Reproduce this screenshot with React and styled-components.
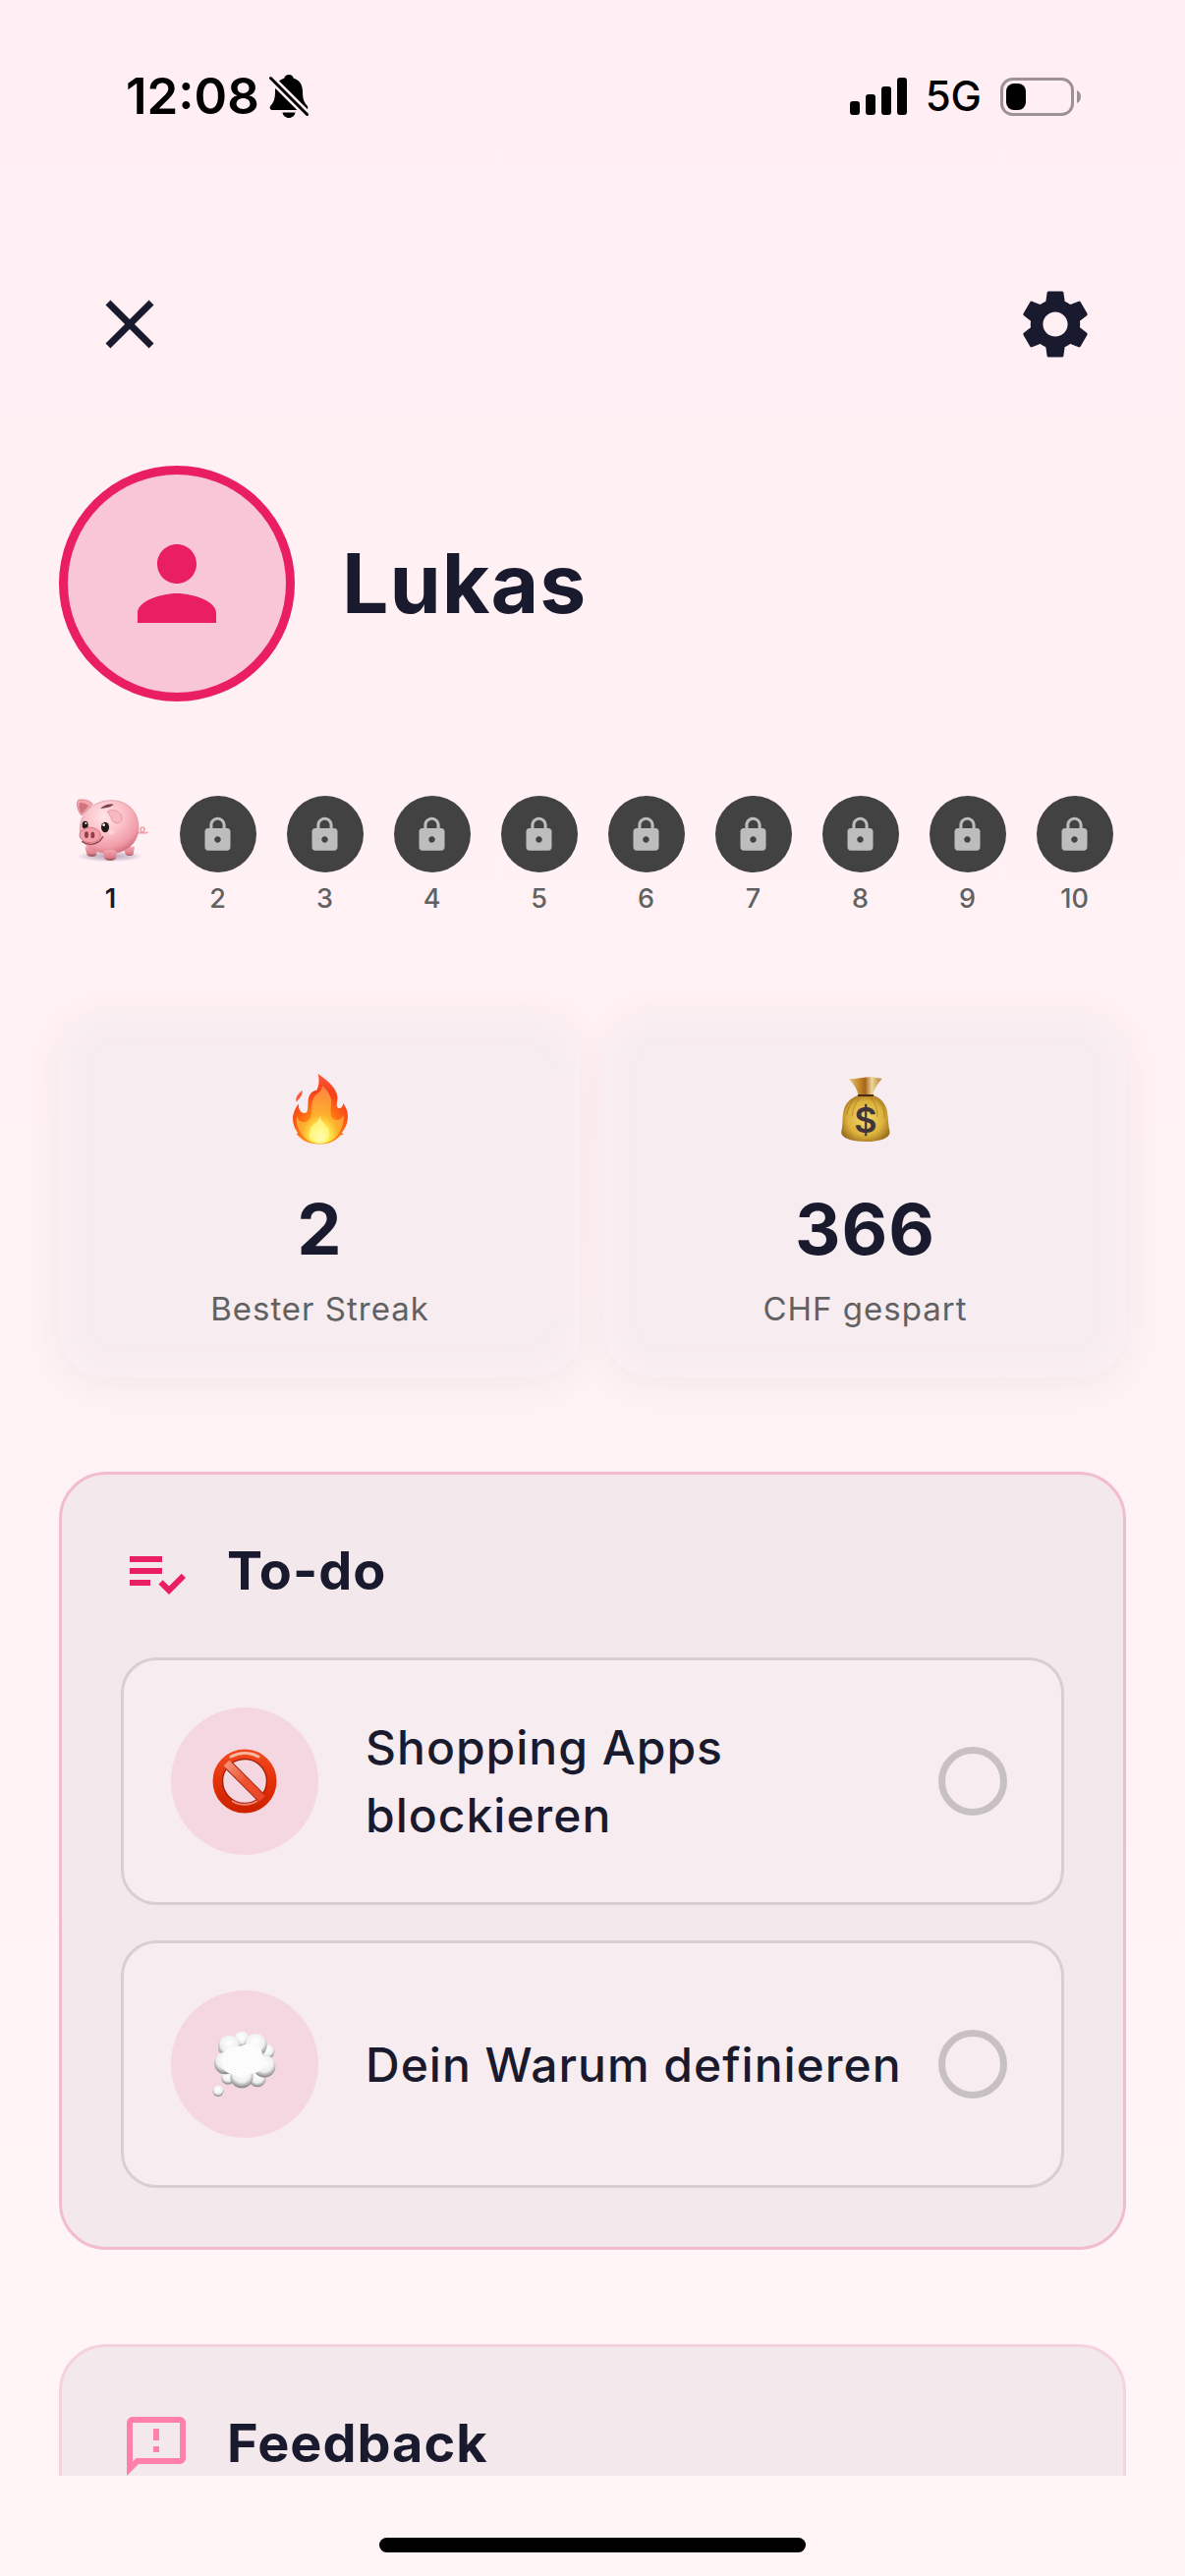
import React, { useState } from "react";
import styled, { createGlobalStyle } from "styled-components";
import {
  MdClose,
  MdLock,
  MdOutlineFeedback,
  MdPerson,
  MdPlaylistAddCheck,
  MdSettings,
} from "react-icons/md";

const GlobalStyle = createGlobalStyle`
  * {
    box-sizing: border-box;
  }
  body {
    margin: 0;
    color: #1a1a2e;
    font-family: Inter, "Liberation Sans", sans-serif;
  }
  h1, h2, p, ol, ul {
    margin: 0;
    padding: 0;
    list-style: none;
  }
`;

const Screen = styled.div`
  height: 100vh;
  display: flex;
  flex-direction: column;
  background: linear-gradient(#ffeff4, #fff2f4 55%, #fff5f7);
`;

const StatusBar = styled.div`
  display: flex;
  align-items: center;
  justify-content: space-between;
  height: 196px;
  padding: 0 105px 0 128px;
  color: #000;
`;

const StatusGroup = styled.div`
  display: flex;
  align-items: center;
  gap: ${(props) => props.$gap}px;
`;

const Clock = styled.span`
  font-size: 51px;
  line-height: 60px;
  font-weight: 600;
`;

const Network = styled.span`
  font-size: 42px;
  line-height: 60px;
  font-weight: 500;
`;

const Content = styled.main`
  flex: 1;
  min-height: 0;
  overflow: hidden;
  display: flex;
  flex-direction: column;
  gap: 96px;
  padding: 62px 60px 0;
  & > * {
    flex-shrink: 0;
  }
`;

const Top = styled.header`
  display: flex;
  flex-direction: column;
  gap: 72px;
`;

const Toolbar = styled.div`
  display: flex;
  justify-content: space-between;
`;

const IconButton = styled.button`
  display: flex;
  align-items: center;
  justify-content: center;
  width: 144px;
  height: 144px;
  padding: 0;
  border: 0;
  background: none;
  color: #1a1a2e;
  font-size: 84px;
  cursor: pointer;
`;

const Profile = styled.div`
  display: flex;
  align-items: center;
  gap: 48px;
`;

const Avatar = styled.div`
  display: flex;
  align-items: center;
  justify-content: center;
  width: 240px;
  height: 240px;
  border: 9px solid #e91e63;
  border-radius: 50%;
  background: #f9c6d8;
  color: #e91e63;
  font-size: 120px;
`;

const Name = styled.h1`
  font-size: 84px;
  line-height: 100px;
  font-weight: 700;
  letter-spacing: 1px;
`;

const Levels = styled.ol`
  display: flex;
  && {
    margin: 0 -2px;
  }
`;

const Level = styled.li`
  flex: 1;
  display: flex;
  flex-direction: column;
  align-items: center;
  gap: 8px;
  font-size: 27px;
  line-height: 38px;
  font-weight: ${(props) => (props.$active ? 600 : 500)};
  color: ${(props) => (props.$active ? "#1a1a2e" : "#616161")};
`;

const LevelBadge = styled.span`
  display: flex;
  align-items: center;
  justify-content: center;
  width: 78px;
  height: 78px;
  border-radius: 50%;
  background: #424242;
  color: #bdbdbd;
  font-size: 39px;
`;

const Stats = styled.section`
  display: grid;
  grid-template-columns: 1fr 1fr;
  gap: 24px;
`;

const StatCard = styled.div`
  display: flex;
  flex-direction: column;
  align-items: center;
  padding: 48px;
  border-radius: 48px;
  background: #f7ecef;
  box-shadow: 0 6px 36px rgba(60, 50, 60, 0.06),
    inset 0 0 36px rgba(255, 244, 247, 0.8);
`;

const StatIcon = styled.div`
  display: flex;
  align-items: center;
  height: 102px;
`;

const StatValue = styled.p`
  margin-top: 24px;
  font-size: 72px;
  line-height: 94px;
  font-weight: 700;
  letter-spacing: 1px;
`;

const StatLabel = styled.p`
  margin-top: 12px;
  font-size: 33px;
  line-height: 44px;
  letter-spacing: 1px;
  color: #616161;
`;

const Card = styled.section`
  padding: 60px;
  border: 3px solid ${(props) => props.$border};
  border-radius: 48px;
  background: #f3e8eb;
`;

const CardHeader = styled.div`
  display: flex;
  align-items: center;
  gap: 36px;
  min-height: 81px;
  color: ${(props) => props.$color};
  & svg {
    font-size: 72px;
  }
`;

const CardTitle = styled.h2`
  font-size: 54px;
  line-height: 60px;
  font-weight: 700;
  letter-spacing: 1px;
  color: #1a1a2e;
  && {
    padding-bottom: 6px;
  }
`;

const TodoList = styled.ul`
  display: flex;
  flex-direction: column;
  gap: 36px;
  && {
    margin-top: 45px;
  }
`;

const TodoItem = styled.label`
  display: flex;
  align-items: center;
  padding: 48px;
  border: 3px solid #d9ced1;
  border-radius: 36px;
  background: #f7ecef;
  cursor: pointer;
`;

const TodoIcon = styled.span`
  flex: none;
  display: flex;
  align-items: center;
  justify-content: center;
  width: 150px;
  height: 150px;
  border-radius: 50%;
  background: #f4d7e0;
`;

const TodoText = styled.span`
  flex: 1;
  margin: 0 24px 0 48px;
  font-size: 48px;
  line-height: 69px;
  font-weight: 500;
  letter-spacing: 1px;
`;

const Check = styled.input`
  flex: none;
  appearance: none;
  width: 70px;
  height: 70px;
  margin: 7px;
  border: 7px solid #c8c1c3;
  border-radius: 50%;
  cursor: pointer;
  &:checked {
    border-color: #e91e63;
    background: #e91e63;
  }
`;

const HomeArea = styled.footer`
  flex: none;
  display: flex;
  justify-content: center;
  height: 102px;
  padding-top: 63px;
`;

const HomeIndicator = styled.div`
  width: 36%;
  height: 15px;
  border-radius: 8px;
  background: #000;
`;

const BellOff = () => (
  <svg width="40" height="44" viewBox="0 0 40 44" aria-hidden="true">
    <path
      d="M20 0c2.500 0 4.300 1.500 4.600 3.500C31 5.500 34 10.500 34 17c0 8 1.500 11 4.500 14.500 1.500 2 1 4.500-2 4.500H3.500c-3 0-3.500-2.500-2-4.500C4.500 28 6 25 6 17 6 10.500 9 5.500 15.400 3.500 15.700 1.500 17.500 0 20 0zM13.500 38.500h13c-.5 3.200-3.200 5.500-6.500 5.500s-6-2.300-6.500-5.500z"
      fill="#000"
    />
    <path d="M1 3l38 38" stroke="#ffeff4" strokeWidth="8" />
    <path d="M1.500 3.500l37 37" stroke="#000" strokeWidth="3" strokeLinecap="round" />
  </svg>
);

const Signal = () => (
  <svg width="58" height="38" viewBox="0 0 58 38" aria-hidden="true">
    <rect x="0" y="24" width="10" height="14" rx="3" />
    <rect x="16" y="17" width="10" height="21" rx="3" />
    <rect x="32" y="9" width="10" height="29" rx="3" />
    <rect x="48" y="0" width="10" height="38" rx="3" />
  </svg>
);

const Battery = () => (
  <svg width="83" height="39" viewBox="0 0 83 39" aria-hidden="true">
    <rect x="1.500" y="1.500" width="72" height="36" rx="11" fill="none" stroke="#9c9194" strokeWidth="3" />
    <path d="M78 13c2.500 1 4 3.500 4 6.500s-1.500 5.500-4 6.500z" fill="#9c9194" />
    <rect x="6" y="6" width="20" height="27" rx="8" />
  </svg>
);

const Pig = () => (
  <svg width="78" height="78" viewBox="45 60 234 234" aria-hidden="true">
    <defs>
      <radialGradient id="pigBody" cx="0.42" cy="0.3" r="0.75">
        <stop offset="0" stopColor="#ffe6e8" />
        <stop offset="0.45" stopColor="#fbc0c8" />
        <stop offset="0.8" stopColor="#f09aa6" />
        <stop offset="1" stopColor="#c86675" />
      </radialGradient>
      <linearGradient id="pigLeg" x1="0" y1="0" x2="0" y2="1">
        <stop offset="0" stopColor="#f5a9b2" />
        <stop offset="0.7" stopColor="#dd7f8a" />
        <stop offset="1" stopColor="#8d4650" />
      </linearGradient>
      <radialGradient id="pigShade">
        <stop offset="0" stopColor="#8f7a98" stopOpacity="0.7" />
        <stop offset="0.7" stopColor="#b5a3be" stopOpacity="0.4" />
        <stop offset="1" stopColor="#cdbcd4" stopOpacity="0" />
      </radialGradient>
    </defs>
    <ellipse cx="158" cy="245" rx="104" ry="17" fill="url(#pigShade)" />
    <path d="M244 172c9 4 20 0 20-9s-12-8-12 0 10 14 21 9" fill="none" stroke="#eea0a8" strokeWidth="5" strokeLinecap="round" />
    <path d="M82 215h38l-2 26c-6 6-22 6-29 0zM200 215h34l-4 24c-5 5-18 5-24 0z" fill="url(#pigLeg)" />
    <path d="M62 73c14-4 36 1 44 12l-34 35C61 110 54 84 62 73z" fill="#f4a5ae" stroke="#c9707b" strokeWidth="2" />
    <path d="M66 81c9-1 22 4 28 10l-22 24c-8-9-10-24-6-34z" fill="#cf7681" />
    <path d="M163 74c50 0 83 35 83 82 0 44-33 80-86 80-55 0-93-27-93-75 0-50 44-87 96-87z" fill="url(#pigBody)" stroke="#dc8d98" strokeWidth="2" />
    <path d="M138 230c6-8 36-8 42 0l-3 22c-8 8-27 8-35 0z" fill="url(#pigLeg)" />
    <path d="M130 98c10-10 24-15 40-12-8 9-23 10-40 13z" fill="#74404a" />
    <path d="M152 108c12-8 30-4 39 8 8 12 4 26-8 27-14 1-19-8-21-17-3-9-10-10-10-18z" fill="#f8b8bf" stroke="#d9848f" strokeWidth="2" />
    <ellipse cx="163" cy="172" rx="9" ry="6" fill="#ffd9da" opacity="0.8" />
    <ellipse cx="83" cy="149" rx="9" ry="12" fill="#211819" />
    <ellipse cx="144" cy="156" rx="12" ry="16" fill="#211819" />
    <circle cx="85" cy="144" r="3" fill="#fff" />
    <circle cx="140" cy="149" r="4" fill="#fff" />
    <path d="M74 200c20 14 50 10 63-15" fill="none" stroke="#8f434e" strokeWidth="4" strokeLinecap="round" />
    <ellipse cx="98" cy="180" rx="32" ry="23" fill="#f4a0a9" stroke="#d57681" strokeWidth="3" />
    <ellipse cx="87" cy="179" rx="6" ry="10" fill="#8f3f4a" />
    <ellipse cx="106" cy="180" rx="6" ry="10" fill="#8f3f4a" />
  </svg>
);

const Fire = () => (
  <svg width="56" height="72" viewBox="0 0 56 72" aria-hidden="true">
    <defs>
      <radialGradient id="fireOuter" cx="0.5" cy="0.85" r="0.85">
        <stop offset="0" stopColor="#ffb300" />
        <stop offset="0.4" stopColor="#ff7b12" />
        <stop offset="0.7" stopColor="#f8401b" />
        <stop offset="1" stopColor="#f95a3c" />
      </radialGradient>
      <radialGradient id="fireInner" cx="0.5" cy="0.88" r="0.85">
        <stop offset="0" stopColor="#fffde0" />
        <stop offset="0.2" stopColor="#fff04d" />
        <stop offset="0.45" stopColor="#fdb02e" />
        <stop offset="1" stopColor="#ff8440" />
      </radialGradient>
    </defs>
    <path d="M9.600 16.700C10 22 7 25 3.400 28.500 2.500 23 6 20 9.600 16.700z" fill="#fb5b42" />
    <path d="M25.600 0C36 7 45 15 45.500 24c0 4-2 9 .5 10.700 3 1.300 5-1.200 5.300-4.700C55 35 56.500 40 55.800 46c-.5 6-3 10-6 14l2 1.500-3.500 1.200C43 69 36 71.500 27.500 71.500S11 69 7 64.500L3.500 61l1.800-.5C2 56 0 51 0 45.500 0 40 3 34.500 5.700 30.500c0 5 2 9.500 6 9.500 6 0 2-11 5.300-18 2-4 5-5 7.500-5.500C27 11 27 5 25.600 0z" fill="url(#fireOuter)" />
    <path d="M30 12c8 7 10 14 9 20-1 7-1 14 5 15 4 0 6-2 8-5 0 7-2 13-5 18-4 7-11 11-19.500 11S12 67 8 60c-3-5-5-10-4-17 2 5 5 7 9 6 10-3 3-16 9-26 3-4 8-5 8-11z" fill="url(#fireInner)" />
    <path d="M28 42c0 7 5 9 8 14 3 8-1 14-9 14s-13-6-9-14c2-5 9-7 10-14z" fill="#fffb9a" opacity="0.7" />
  </svg>
);

const MoneyBag = () => (
  <svg width="50" height="66" viewBox="0 0 50 66" aria-hidden="true">
    <defs>
      <radialGradient id="bagBody" cx="0.5" cy="0.5" r="0.62">
        <stop offset="0" stopColor="#f3da6a" />
        <stop offset="0.6" stopColor="#dcb23c" />
        <stop offset="1" stopColor="#8d5d17" />
      </radialGradient>
      <linearGradient id="bagNeck">
        <stop offset="0" stopColor="#e6c98c" />
        <stop offset="0.3" stopColor="#c78d2e" />
        <stop offset="0.5" stopColor="#a8651c" />
        <stop offset="0.7" stopColor="#edd79c" />
        <stop offset="1" stopColor="#b67c2c" />
      </linearGradient>
    </defs>
    <path d="M7.500 2c5 1 9-1 14-1 6-1 12-1 20 1-4 5-8 10-9 16H17.500C16 12 12 6 7.500 2z" fill="url(#bagNeck)" />
    <path d="M17 19h16c8 3 13 9 14 17 1 7 1 13 2.500 20 .5 6-9 10-24.500 10S-.5 62 .2 56C2 49 1 43 2.500 35 4 27 9 22 17 19z" fill="url(#bagBody)" />
    <path d="M19 21c-4 5-7 11-8 19M30 21c4 5 7 11 7 20M14 22c-5 5-7 10-8 17M40 25c3 5 4 10 4 17" fill="none" stroke="#a9791f" strokeWidth="1" opacity="0.7" />
    <path d="M17 18h16v2H17z" fill="#4b2a16" />
    <text x="25" y="57" textAnchor="middle" fontSize="36" fontWeight="600" fill="#41343a">
      $
    </text>
  </svg>
);

const Prohibited = () => (
  <svg width="66" height="66" viewBox="0 0 66 66" aria-hidden="true">
    <defs>
      <linearGradient id="ring" x1="0" y1="0" x2="0" y2="1">
        <stop offset="0" stopColor="#f0481e" />
        <stop offset="0.5" stopColor="#e4310a" />
        <stop offset="1" stopColor="#cf2300" />
      </linearGradient>
      <linearGradient id="bar" x1="0" y1="0" x2="1" y2="1">
        <stop offset="0" stopColor="#f4937c" />
        <stop offset="0.5" stopColor="#ee5230" />
        <stop offset="1" stopColor="#e8472a" />
      </linearGradient>
    </defs>
    <path d="M14 14l37 37" stroke="#a51a00" strokeWidth="10" />
    <circle cx="33" cy="33" r="27.500" fill="none" stroke="url(#ring)" strokeWidth="10" />
    <circle cx="33" cy="33" r="22.500" fill="none" stroke="#a82008" strokeWidth="1.500" />
    <path d="M14.500 14.500l36.500 36.500" stroke="url(#bar)" strokeWidth="8" />
    <path d="M19 8a29 29 0 0 1 28 0" fill="none" stroke="#fbd3c4" strokeWidth="3" strokeLinecap="round" opacity="0.8" />
    <path d="M20 53a24 24 0 0 0 26 0" fill="none" stroke="#f2a08d" strokeWidth="2" opacity="0.8" />
  </svg>
);

const Thought = () => (
  <svg width="66" height="68" viewBox="50 1040 198 204" aria-hidden="true">
    <defs>
      <radialGradient id="puff" cx="0.5" cy="0.35" r="0.65">
        <stop offset="0" stopColor="#fff" />
        <stop offset="0.6" stopColor="#f0f0f0" />
        <stop offset="1" stopColor="#7c7c7e" />
      </radialGradient>
    </defs>
    <g fill="url(#puff)">
      <circle cx="98" cy="1184" r="20" />
      <circle cx="218" cy="1104" r="22" />
      <circle cx="140" cy="1066" r="24" />
      <circle cx="188" cy="1186" r="26" />
      <circle cx="102" cy="1089" r="34" />
      <circle cx="182" cy="1084" r="35" />
      <circle cx="90" cy="1139" r="34" />
      <circle cx="209" cy="1149" r="34" />
      <circle cx="140" cy="1180" r="35" />
      <circle cx="68" cy="1224" r="17" />
    </g>
    <path d="M88 1104c18-20 38-12 52-18s38-10 54 4c12 20 18 42 8 66-12 14-28 12-40 18s-30 8-46 0c-22-4-34-14-36-34 0-18 0-26 8-36z" fill="#fcfcfc" />
  </svg>
);

const stats = [
  { icon: <Fire />, value: 2, label: "Bester Streak" },
  { icon: <MoneyBag />, value: 366, label: "CHF gespart" },
];

const todos = [
  { icon: <Prohibited />, text: "Shopping Apps blockieren" },
  { icon: <Thought />, text: "Dein Warum definieren" },
];

const Todo = ({ icon, text }) => {
  const [done, setDone] = useState(false);

  return (
    <li>
      <TodoItem>
        <TodoIcon>{icon}</TodoIcon>
        <TodoText>{text}</TodoText>
        <Check
          type="checkbox"
          checked={done}
          onChange={(e) => setDone(e.target.checked)}
        />
      </TodoItem>
    </li>
  );
};

const App = () => {
  return (
    <>
      <GlobalStyle />
      <Screen>
        <StatusBar>
          <StatusGroup $gap={10}>
            <Clock>12:08</Clock>
            <BellOff />
          </StatusGroup>
          <StatusGroup $gap={19}>
            <Signal />
            <Network>5G</Network>
            <Battery />
          </StatusGroup>
        </StatusBar>
        <Content>
          <Top>
            <Toolbar>
              <IconButton type="button" aria-label="Schliessen">
                <MdClose />
              </IconButton>
              <IconButton type="button" aria-label="Einstellungen">
                <MdSettings />
              </IconButton>
            </Toolbar>
            <Profile>
              <Avatar>
                <MdPerson />
              </Avatar>
              <Name>Lukas</Name>
            </Profile>
          </Top>
          <Levels>
            {Array.from({ length: 10 }, (_, idx) => (
              <Level key={idx} $active={idx === 0}>
                {idx === 0 ? (
                  <Pig />
                ) : (
                  <LevelBadge>
                    <MdLock />
                  </LevelBadge>
                )}
                <span>{idx + 1}</span>
              </Level>
            ))}
          </Levels>
          <Stats>
            {stats.map((item) => (
              <StatCard key={item.label}>
                <StatIcon>{item.icon}</StatIcon>
                <StatValue>{item.value}</StatValue>
                <StatLabel>{item.label}</StatLabel>
              </StatCard>
            ))}
          </Stats>
          <Card $border="#f2bcd0">
            <CardHeader $color="#e91e63">
              <MdPlaylistAddCheck />
              <CardTitle>To-do</CardTitle>
            </CardHeader>
            <TodoList>
              {todos.map((item) => (
                <Todo key={item.text} icon={item.icon} text={item.text} />
              ))}
            </TodoList>
          </Card>
          <Card $border="#f5d2de">
            <CardHeader $color="#ff80ab">
              <MdOutlineFeedback />
              <CardTitle>Feedback</CardTitle>
            </CardHeader>
          </Card>
        </Content>
        <HomeArea>
          <HomeIndicator />
        </HomeArea>
      </Screen>
    </>
  );
};

export default App;
